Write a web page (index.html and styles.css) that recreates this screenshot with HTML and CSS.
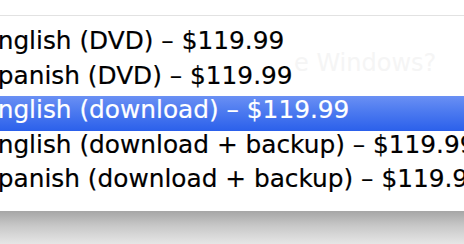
FILE: index.html
```html
<!DOCTYPE html>
<html>
<head>
<meta charset="utf-8">
<link rel="stylesheet" href="styles.css">
</head>
<body>
<div class="page">
  <div class="top"></div>
  <div class="menu">
    <span class="ghost">e Windows?</span>
    <div class="item">English (DVD) – $119.99</div>
    <div class="item">Spanish (DVD) – $119.99</div>
    <div class="item selected">English (download) – $119.99</div>
    <div class="item">English (download + backup) – $119.99</div>
    <div class="item">Spanish (download + backup) – $119.99</div>
  </div>
  <div class="shadow"></div>
</div>
</body>
</html>
```

FILE: styles.css
```css
html, body {
  margin: 0;
  padding: 0;
  background: #ffffff;
}
.page {
  width: 464px;
  height: 244px;
  overflow: hidden;
  display: flex;
  flex-direction: column;
}
.top {
  height: 15px;
  flex: none;
  background: #ffffff;
  border-bottom: 1px solid #e2e2e2;
}
.menu {
  position: relative;
  flex: none;
  margin-left: -40px;
  width: 560px;
  padding: 11px 0 11.5px 0;
  background: #ffffff;
  font-family: "DejaVu Sans", "Verdana", sans-serif;
  font-size: 24.8px;
  color: #000000;
}
.ghost {
  position: absolute;
  left: 334px;
  top: 33px;
  font-size: 24px;
  color: #f5f5f5;
  white-space: nowrap;
}
.item {
  position: relative;
  line-height: 27px;
  padding: 0 0 7.5px 22px;
  white-space: nowrap;
  -webkit-text-stroke: 0.2px #000000;
}
.selected {
  color: #ffffff;
  -webkit-text-stroke: 0.2px #ffffff;
  background: linear-gradient(#6a90f4 0%, #4f7cf0 40%, #2b60eb 100%);
}
.shadow {
  flex: 1;
  background: linear-gradient(#a6a6a6 0%, #c8c8c8 45%, #e6e6e6 100%);
}
```
